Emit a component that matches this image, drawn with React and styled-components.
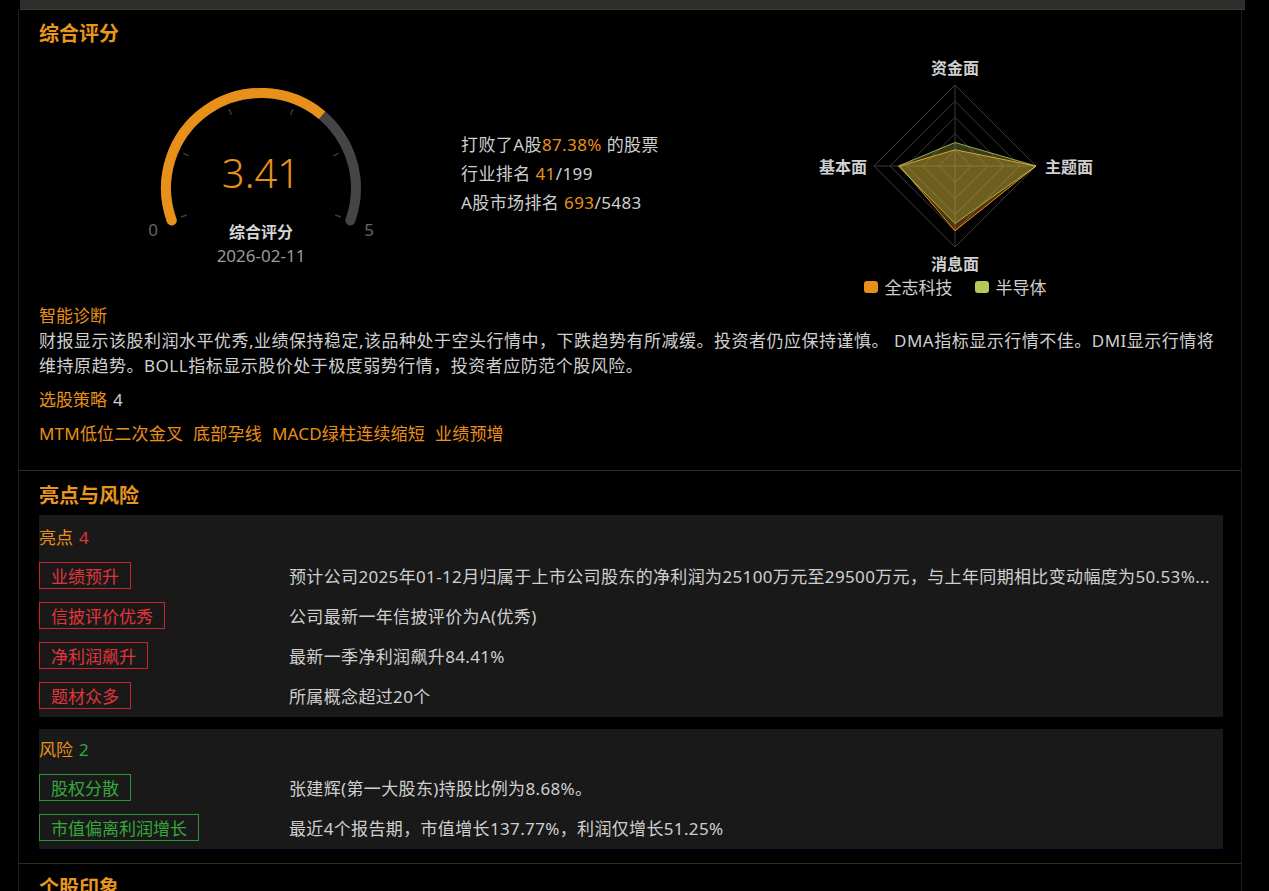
import React from 'react';
import styled, { createGlobalStyle } from 'styled-components';

const GlobalStyle = createGlobalStyle`
  html, body {
    margin: 0;
    padding: 0;
    background: #000;
  }
  body {
    font-family: "Noto Sans", "Noto Sans CJK SC", sans-serif;
    color: #c8c8c8;
  }
`;

const ORANGE = '#e8901a';
const GREEN_LEGEND = '#b3c95a';
const FONT = '"Noto Sans", "Noto Sans CJK SC", sans-serif';

const Page = styled.div`
  width: 1269px;
  min-height: 891px;
  overflow: hidden;
`;

const TopBar = styled.div`
  margin-left: 20px;
  width: 1225px;
  height: 9px;
  background: #2d2d2d;
  border-bottom: 1px solid #4b3b22;
`;

const Panel = styled.div`
  margin-left: 18px;
  width: 1222px;
  border-left: 1px solid #1e1e1e;
  border-right: 1px solid #1e1e1e;
`;

const Section = styled.section`
  padding: ${(p) => p.$pad || '11px 18px 24px 20px'};
  border-bottom: 1px solid #3a2912;
`;

const Title = styled.h2`
  margin: 0;
  font-family: "Noto Sans CJK SC", sans-serif;
  font-size: 20px;
  font-weight: 700;
  line-height: 24px;
  color: #e8961c;
`;

const TopRow = styled.div`
  display: flex;
  height: 258px;
`;

const GaugeBox = styled.div`
  margin-left: 102px;
  width: 240px;
`;

const Stats = styled.div`
  margin-left: 80px;
  width: 300px;
  padding-top: 85px;
  font-family: ${FONT};
  font-size: 17px;
  letter-spacing: 0.4px;
  line-height: 29px;
  color: #cfcfcf;
`;

const Hi = styled.span`
  color: ${ORANGE};
`;

const RadarBox = styled.div`
  margin-left: 44px;
  width: 300px;
  display: flex;
  flex-direction: column;
  align-items: center;
`;

const Legend = styled.div`
  display: flex;
  gap: 22px;
  font-family: "Noto Sans CJK SC", sans-serif;
  font-size: 17px;
  line-height: 20px;
  color: #cfcfcf;
`;

const LegendItem = styled.span`
  display: flex;
  align-items: center;
  gap: 7px;
  &::before {
    content: '';
    width: 14px;
    height: 12px;
    border-radius: 3px;
    background: ${(p) => p.$color};
  }
`;

const Label = styled.div`
  font-family: ${FONT};
  font-size: 17px;
  line-height: 25px;
  color: ${ORANGE};
  margin-top: ${(p) => p.$mt || 0}px;
`;

const Count = styled.span`
  margin-left: 6px;
  color: ${(p) => p.$color || '#cfcfcf'};
`;

const Paragraph = styled.p`
  margin: 0;
  font-family: ${FONT};
  font-size: 17px;
  letter-spacing: 0.5px;
  line-height: 25px;
  color: #cfcfcf;
`;

const StrategyList = styled.div`
  display: flex;
  gap: 10px;
  margin-top: 9px;
  font-family: ${FONT};
  font-size: 17px;
  letter-spacing: 0.2px;
  line-height: 25px;
  color: ${ORANGE};
`;

const Box = styled.div`
  margin-top: ${(p) => p.$mt}px;
  background: #191919;
  padding: ${(p) => p.$pt}px 0 1px 0;
`;

const Row = styled.div`
  display: flex;
  align-items: center;
  height: 40px;
`;

const TagCell = styled.div`
  width: 250px;
  flex-shrink: 0;
`;

const Tag = styled.span`
  display: inline-block;
  box-sizing: border-box;
  height: 27px;
  line-height: 25px;
  padding: 0 11px;
  font-family: "Noto Sans CJK SC", sans-serif;
  font-size: 17px;
  color: ${(p) => (p.$tone === 'red' ? '#e0363a' : '#35a83a')};
  border: 1px solid ${(p) => (p.$tone === 'red' ? '#c8262b' : '#2f9433')};
`;

const Desc = styled.div`
  font-family: ${FONT};
  font-size: 17px;
  letter-spacing: 0.35px;
  color: #cfcfcf;
  white-space: nowrap;
`;

const RowsTop = styled.div`
  margin-top: 5.5px;
`;

// gauge geometry
const CX = 120;
const CY = 143;
const R = 95;
const START = 200;
const END = -20;

const pt = (deg, r) => {
  const a = (deg * Math.PI) / 180;
  return [CX + r * Math.cos(a), CY - r * Math.sin(a)];
};

const arc = (from, to) => {
  const [x1, y1] = pt(from, R);
  const [x2, y2] = pt(to, R);
  const large = from - to > 180 ? 1 : 0;
  return `M ${x1} ${y1} A ${R} ${R} 0 ${large} 1 ${x2} ${y2}`;
};

const Gauge = ({ value, max }) => {
  const valAngle = START - ((START - END) * value) / max;
  const ticks = [0, 1, 2, 3, 4, 5].map((i) => START - i * 44);
  const [sx, sy] = pt(START, R);
  return (
    <svg width="240" height="230" viewBox="0 0 240 230">
      <path d={arc(START, END)} stroke="#454545" strokeWidth="10" fill="none" strokeLinecap="round" />
      <path d={arc(START, valAngle)} stroke={ORANGE} strokeWidth="10" fill="none" />
      <circle cx={sx} cy={sy} r="5" fill={ORANGE} />
      {ticks.map((t) => {
        const [x1, y1] = pt(t, 79);
        const [x2, y2] = pt(t, 85);
        return <line key={t} x1={x1} y1={y1} x2={x2} y2={y2} stroke="#3c3c3c" strokeWidth="1.5" />;
      })}
      <text x="12" y="184" fill="#666" fontSize="17" fontFamily="Noto Sans" dominantBaseline="central" textAnchor="middle">0</text>
      <text x="228" y="184" fill="#666" fontSize="17" fontFamily="Noto Sans" dominantBaseline="central" textAnchor="middle">5</text>
      <text x={CX} y="127" fill={ORANGE} fontSize="40" fontWeight="300" fontFamily="Noto Sans" dominantBaseline="central" textAnchor="middle">3.41</text>
      <text x={CX} y="186" fill="#d6d6d6" fontSize="16" fontWeight="700" fontFamily="Noto Sans CJK SC" dominantBaseline="central" textAnchor="middle">综合评分</text>
      <text x={CX} y="210" fill="#9a9a9a" fontSize="17" fontFamily="Noto Sans" dominantBaseline="central" textAnchor="middle">2026-02-11</text>
    </svg>
  );
};

// radar: order top, right, bottom, left
const RX = 150;
const RY = 121;
const RR = 81;
const dirs = [[0, -1], [1, 0], [0, 1], [-1, 0]];
const poly = (vals) => vals.map((v, i) => `${RX + dirs[i][0] * RR * v},${RY + dirs[i][1] * RR * v}`).join(' ');

const Radar = () => (
  <svg width="300" height="232" viewBox="0 0 300 232">
    {[1, 2, 3, 4, 5].map((k) => (
      <polygon key={k} points={poly([k / 5, k / 5, k / 5, k / 5])} fill="none" stroke="#3a3a3a" strokeWidth="1" />
    ))}
    {dirs.map(([dx, dy], i) => (
      <line key={i} x1={RX} y1={RY} x2={RX + dx * RR} y2={RY + dy * RR} stroke="#3a3a3a" strokeWidth="1" />
    ))}
    <polygon points={poly([0.2, 1, 0.8, 0.68])} fill={ORANGE} fillOpacity="0.35" stroke={ORANGE} strokeWidth="1" />
    <polygon points={poly([0.29, 1, 0.71, 0.7])} fill={GREEN_LEGEND} fillOpacity="0.3" stroke={GREEN_LEGEND} strokeOpacity="0.8" strokeWidth="1" />
    <g fill="#d0d0d0" fontSize="16" fontWeight="700" fontFamily="Noto Sans CJK SC">
      <text x={RX} y="22" textAnchor="middle" dominantBaseline="central">资金面</text>
      <text x="240" y={RY} textAnchor="start" dominantBaseline="central">主题面</text>
      <text x="62" y={RY} textAnchor="end" dominantBaseline="central">基本面</text>
      <text x={RX} y="218" textAnchor="middle" dominantBaseline="central">消息面</text>
    </g>
  </svg>
);

const highlights = [
  ['业绩预升', '预计公司2025年01-12月归属于上市公司股东的净利润为25100万元至29500万元，与上年同期相比变动幅度为50.53%...'],
  ['信披评价优秀', '公司最新一年信披评价为A(优秀)'],
  ['净利润飙升', '最新一季净利润飙升84.41%'],
  ['题材众多', '所属概念超过20个'],
];

const risks = [
  ['股权分散', '张建辉(第一大股东)持股比例为8.68%。'],
  ['市值偏离利润增长', '最近4个报告期，市值增长137.77%，利润仅增长51.25%'],
];

const strategies = ['MTM低位二次金叉', '底部孕线', 'MACD绿柱连续缩短', '业绩预增'];

export default function App() {
  return (
    <Page>
      <GlobalStyle />
      <TopBar />
      <Panel>
        <Section>
          <Title>综合评分</Title>
          <TopRow>
            <GaugeBox>
              <Gauge value={3.41} max={5} />
            </GaugeBox>
            <Stats>
              <div>打败了A股<Hi>87.38%</Hi> 的股票</div>
              <div>行业排名 <Hi>41</Hi>/199</div>
              <div>A股市场排名 <Hi>693</Hi>/5483</div>
            </Stats>
            <RadarBox>
              <Radar />
              <Legend>
                <LegendItem $color={ORANGE}>全志科技</LegendItem>
                <LegendItem $color={GREEN_LEGEND}>半导体</LegendItem>
              </Legend>
            </RadarBox>
          </TopRow>
          <Label>智能诊断</Label>
          <Paragraph>
            财报显示该股利润水平优秀,业绩保持稳定,该品种处于空头行情中，下跌趋势有所减缓。投资者仍应保持谨慎。 DMA指标显示行情不佳。DMI显示行情将维持原趋势。BOLL指标显示股价处于极度弱势行情，投资者应防范个股风险。
          </Paragraph>
          <Label $mt={8.5}>选股策略<Count>4</Count></Label>
          <StrategyList>
            {strategies.map((s) => (
              <span key={s}>{s}</span>
            ))}
          </StrategyList>
        </Section>
        <Section $pad="12px 18px 14px 20px">
          <Title>亮点与风险</Title>
          <Box $mt={8} $pt={10.5}>
            <Label>亮点<Count $color="#e0363a">4</Count></Label>
            <RowsTop>
              {highlights.map(([tag, text]) => (
                <Row key={tag}>
                  <TagCell><Tag $tone="red">{tag}</Tag></TagCell>
                  <Desc>{text}</Desc>
                </Row>
              ))}
            </RowsTop>
          </Box>
          <Box $mt={12} $pt={8.5}>
            <Label>风险<Count $color="#35a83a">2</Count></Label>
            <RowsTop>
              {risks.map(([tag, text]) => (
                <Row key={tag}>
                  <TagCell><Tag $tone="green">{tag}</Tag></TagCell>
                  <Desc>{text}</Desc>
                </Row>
              ))}
            </RowsTop>
          </Box>
        </Section>
        <Section $pad="11px 18px 24px 20px">
          <Title>个股印象</Title>
        </Section>
      </Panel>
    </Page>
  );
}
